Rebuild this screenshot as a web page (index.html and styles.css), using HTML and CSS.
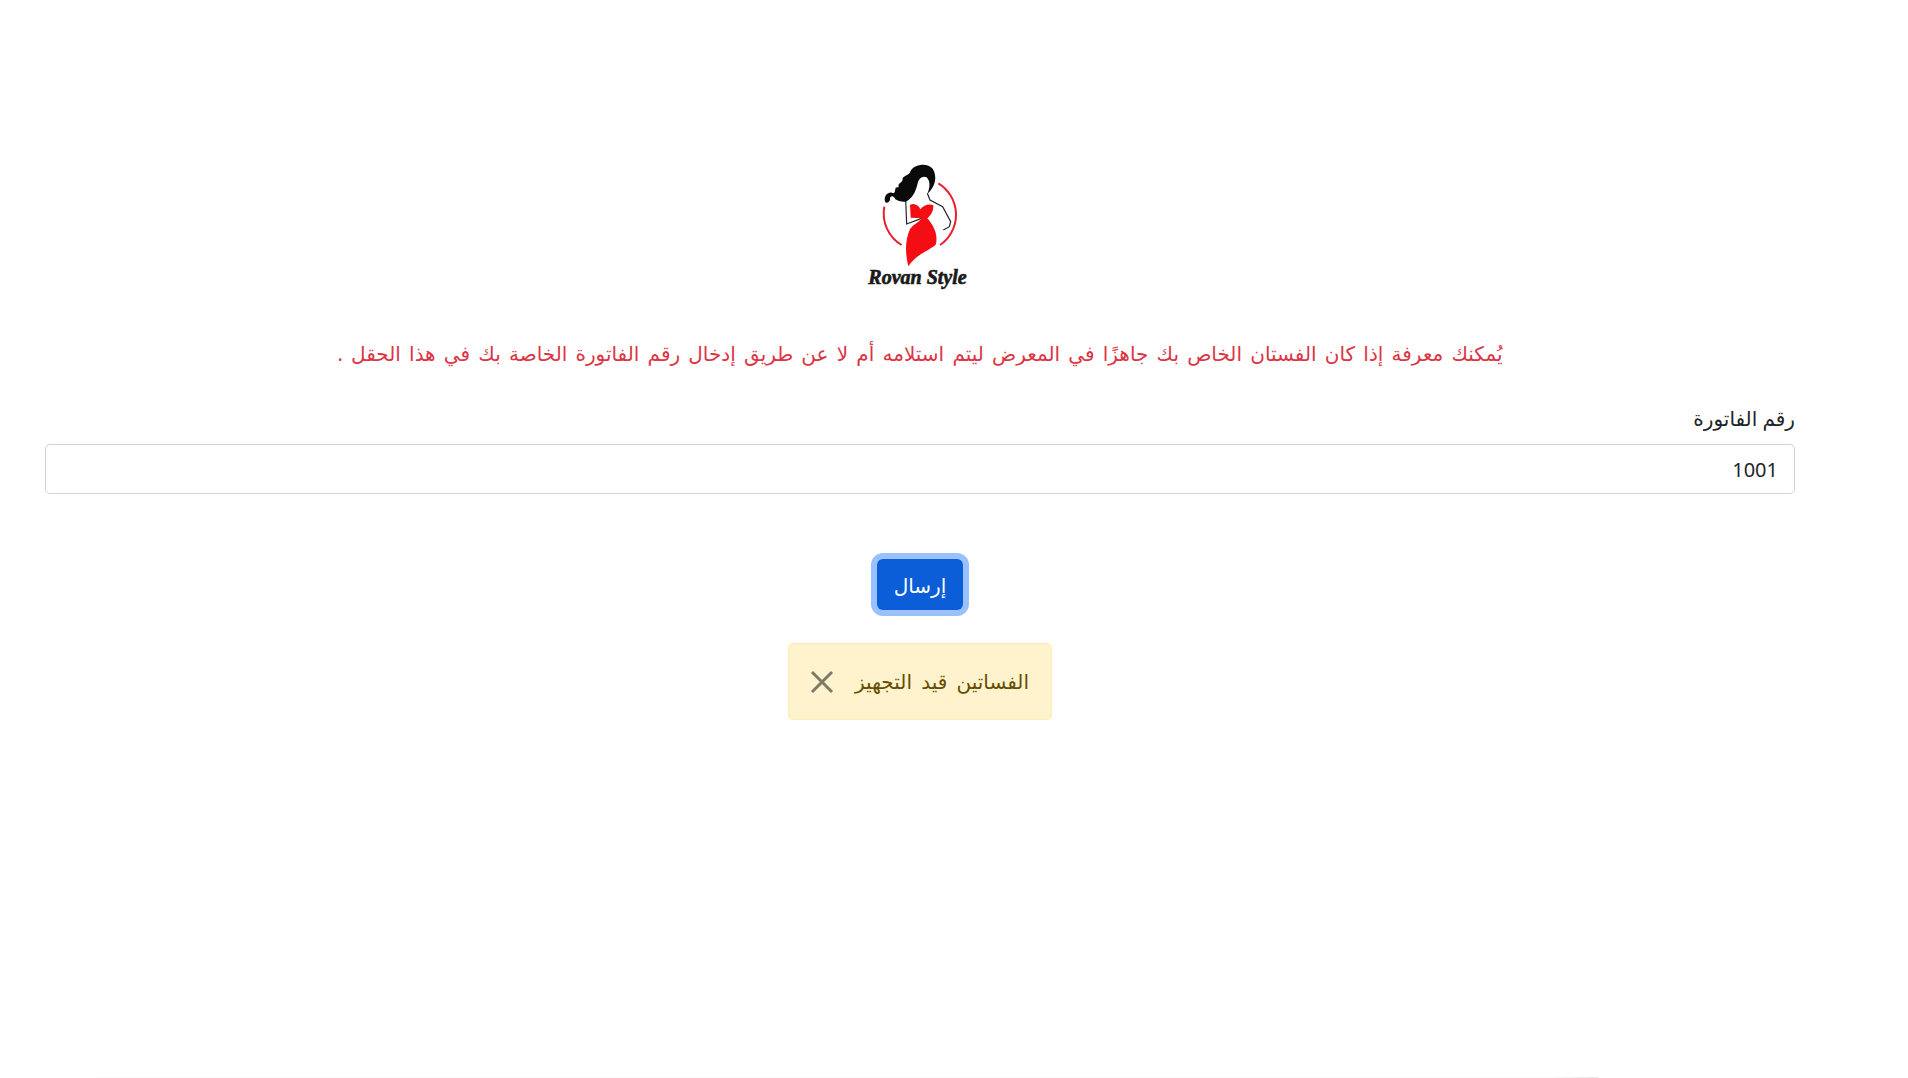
FILE: index.html
```html
<!DOCTYPE html>
<html lang="ar" dir="rtl">
<head>
	<meta charset="utf-8">
	<title>Rovan Style</title>
	<link rel="stylesheet" href="styles.css">
</head>
<body>
<div class="page">
	<div class="logo">
		<svg width="160" height="150" viewBox="0 0 480 450">
			<path class="ring" d="M295 100A110 110 0 0 1 300 285"/>
			<path class="ring" d="M133 170A110 110 0 0 0 185 285"/>
			<path class="line" d="M262 130L270 150L308 170L332 215L328 230L310 240"/>
			<path class="line" d="M197 150L200 222L245 205"/>
			<path class="hair" d="M135 155C130 135 148 122 160 130C170 126 160 108 176 112C172 96 190 100 188 84C196 74 208 76 212 62C226 42 262 38 278 56C292 78 288 108 262 132C270 112 272 95 260 82C248 76 238 84 234 96C228 120 222 140 200 154C190 158 176 154 166 148C160 134 148 138 150 150C146 160 138 160 135 155Z"/>
			<path class="dress" d="M210 165C222 158 236 165 241 178C250 166 268 160 280 166C281 185 272 196 262 205C280 225 296 255 287 284C270 300 225 315 205 349C195 310 195 270 210 237C222 222 240 215 245 205L212 203Z"/>
			<text class="logo-name" x="85" y="403" textLength="295" lengthAdjust="spacingAndGlyphs">Rovan Style</text>
		</svg>
	</div>
	<p class="hint">يُمكنك معرفة إذا كان الفستان الخاص بك جاهزًا في المعرض ليتم استلامه أم لا عن طريق إدخال رقم الفاتورة الخاصة بك في هذا الحقل .</p>
	<form class="invoice-form">
		<label class="field-label" for="invoice">رقم الفاتورة</label>
		<input class="field" id="invoice" type="text" value="1001">
		<button class="send" type="button">إرسال</button>
	</form>
	<div class="notice">
		<span class="notice-text">الفساتين قيد التجهيز</span>
		<svg class="notice-close" width="24" height="24" viewBox="0 0 24 24"><path d="M2 2L22 22M22 2L2 22"/></svg>
	</div>
	<div class="page-edge"></div>
</div>
</body>
</html>
```

FILE: styles.css
```css
html, body {
	margin: 0;
	height: 100%;
	overflow: hidden;
	background: #fff;
}
.page {
	width: 1750px;
	margin-right: 113px;
	display: flex;
	flex-direction: column;
	align-items: center;
	font-family: "Segoe UI", "Noto Sans", "DejaVu Sans", sans-serif;
	font-size: 20px;
	line-height: 1.5;
	color: #212529;
}
.logo {
	margin-top: 150px;
	height: 150px;
}
.logo svg {
	display: block;
	direction: ltr;
}
.ring {
	fill: none;
	stroke: #e8202f;
	stroke-width: 6;
}
.line {
	fill: none;
	stroke: #222;
	stroke-width: 3.5;
}
.hair {
	fill: #0a0a0a;
}
.dress {
	fill: #f50d14;
}
.logo-name {
	font-family: "Liberation Serif", serif;
	font-weight: bold;
	font-style: italic;
	font-size: 64px;
	fill: #1a1a1a;
	stroke: #1a1a1a;
	stroke-width: 2;
}
.hint {
	margin: 39px 0 0;
	color: #dc3545;
	text-align: center;
	word-spacing: 3px;
}
.invoice-form {
	width: 100%;
	margin-top: 35px;
	display: flex;
	flex-direction: column;
}
.field-label {
	margin-bottom: 10px;
}
.field {
	box-sizing: border-box;
	height: 50px;
	padding: 8px 16px;
	border: 1px solid #ced4da;
	border-radius: 5px;
	font: inherit;
	color: #212529;
	text-align: right;
	outline: none;
}
.send {
	align-self: center;
	box-sizing: border-box;
	width: 86px;
	height: 51px;
	margin-top: 65px;
	padding: 2px 0 0;
	border: 0;
	border-radius: 6px;
	background: #0b5ed7;
	box-shadow: 0 0 0 6px #98c1fe;
	color: #fff;
	font: inherit;
}
.notice {
	box-sizing: border-box;
	width: 264px;
	height: 77px;
	margin-top: 33px;
	padding: 0 22px 0 21px;
	display: flex;
	align-items: center;
	justify-content: space-between;
	background: #fff3cd;
	border: 1px solid #ffecb5;
	border-radius: 5px;
	color: #664d03;
	word-spacing: 4px;
}
.notice-close path {
	fill: none;
	stroke: #7f7a66;
	stroke-width: 3;
}
.page-edge {
	align-self: flex-start;
	width: 1502px;
	height: 2px;
	margin-top: 357px;
	margin-right: 197px;
	background: linear-gradient(to right, #f9f9f9 97%, #e6e6e6);
}
```
